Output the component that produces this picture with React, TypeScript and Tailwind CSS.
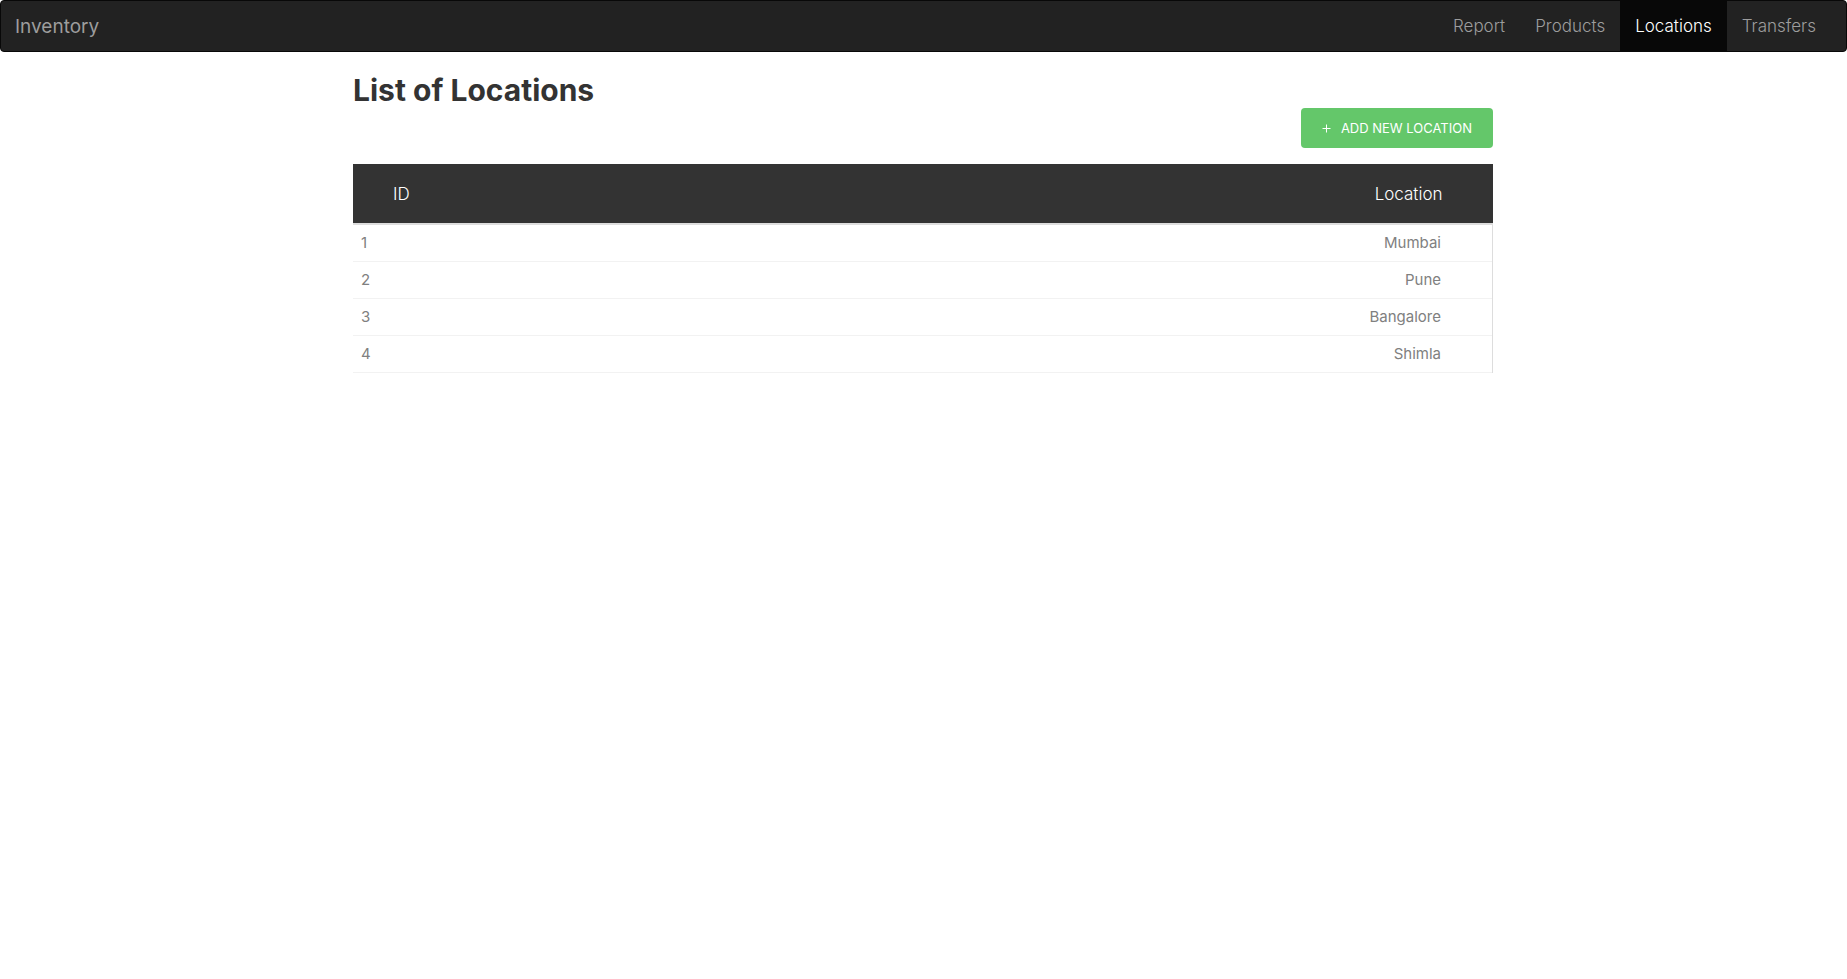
const links = ["Report", "Products", "Locations", "Transfers"];

const locations = [
  { id: 1, name: "Mumbai" },
  { id: 2, name: "Pune" },
  { id: 3, name: "Bangalore" },
  { id: 4, name: "Shimla" },
];

function Navbar({ active }: { active: string }) {
  return (
    <nav className="flex justify-between rounded border border-[#080808] bg-[#222222] pr-[15px] text-[#9d9d9d]">
      <a href="#" className="flex h-[50px] items-center px-[14px] pt-[2px] text-[19px]">
        Inventory
      </a>
      <ul className="flex text-[17px] font-light">
        {links.map((link) => (
          <li key={link}>
            <a
              href={"#" + link.toLowerCase()}
              className={
                link === active
                  ? "flex h-[50px] items-center bg-[#080808] px-[15px] pt-[2px] text-white"
                  : "flex h-[50px] items-center px-[15px] pt-[2px]"
              }
            >
              {link}
            </a>
          </li>
        ))}
      </ul>
    </nav>
  );
}

export default function App() {
  return (
    <div className="min-h-screen bg-white font-['Inter',sans-serif] text-base">
      <Navbar active="Locations" />
      <main className="mx-auto max-w-[1171px] pt-[20px] pr-[16px] pl-[15px]">
        <h1 className="text-[30px] leading-[36px] font-bold text-[#333333]">List of Locations</h1>
        <div className="flex justify-end">
          <button
            type="button"
            className="flex h-[40px] items-center gap-[10px] rounded bg-[#64c76a] px-[21px] text-[13px] leading-[20px] text-white uppercase"
          >
            <svg width="9" height="9" viewBox="0 0 9 9" fill="none" stroke="currentColor" aria-hidden="true">
              <path d="M4.5 0.5v8M0.5 4.5h8" />
            </svg>
            Add new location
          </button>
        </div>
        <table className="mt-[16px] w-full border-collapse">
          <thead>
            <tr className="h-[60px] border-b-2 border-[#dddddd] bg-[#333333] text-[17px] leading-[24px] text-white">
              <th className="pl-[40px] text-left font-light">ID</th>
              <th className="pr-[50px] text-right font-light">Location</th>
            </tr>
          </thead>
          <tbody className="text-[15px] leading-[20px] text-[#808080]">
            {locations.map((location) => (
              <tr key={location.id} className="h-[37px] border-b border-[#f2f2f2]">
                <td className="pl-[8px]">{location.id}</td>
                <td className="border-r border-r-[#dddddd] pr-[51px] text-right">{location.name}</td>
              </tr>
            ))}
          </tbody>
        </table>
      </main>
    </div>
  );
}
